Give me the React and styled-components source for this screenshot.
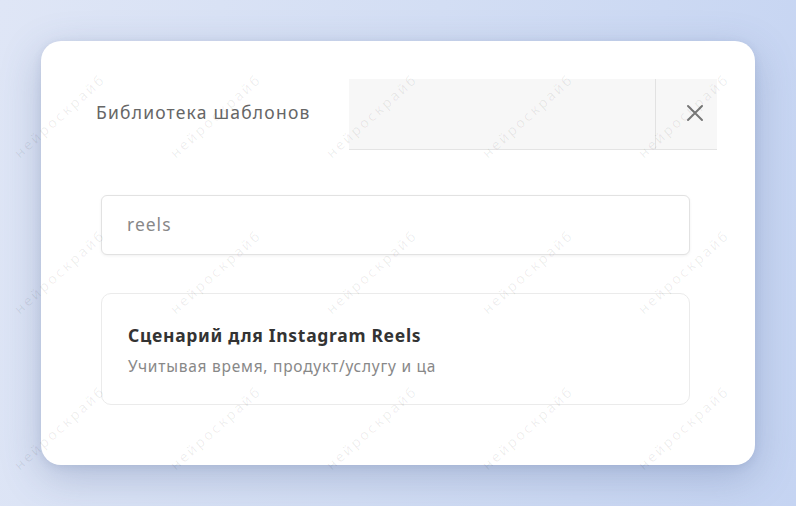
import React from 'react';
import styled, { createGlobalStyle } from 'styled-components';

const GlobalStyle = createGlobalStyle`
    html, body {
        margin: 0;
        padding: 0;
        height: 100%;
    }
    body {
        font-family: "Noto Sans", "Open Sans", Arial, sans-serif;
        background: linear-gradient(100deg, #dfe6f6 0%, #d3def4 50%, #c5d4f2 100%);
        overflow: hidden;
    }
    #root {
        height: 100%;
    }
`

const Page = styled.div`
    position: relative;
    height: 506px;
    padding: 41px 41px 0 41px;
    box-sizing: border-box;
    overflow: hidden;
`

const Modal = styled.div`
    width: 714px;
    height: 424px;
    box-sizing: border-box;
    background: #fff;
    border-radius: 20px;
    box-shadow: 0 12px 40px rgba(70, 90, 140, 0.28), 0 2px 8px rgba(70, 90, 140, 0.12);
    padding: 38px 38px 0 38px;
    display: flex;
    flex-direction: column;
`

const Header = styled.div`
    display: grid;
    grid-template-columns: 270px 1fr;
    height: 71px;
`

const Title = styled.div`
    display: flex;
    align-items: center;
    padding-left: 17px;
    padding-bottom: 5px;
    font-size: 17.5px;
    letter-spacing: 1.2px;
    color: #666;
`

const Toolbar = styled.div`
    display: grid;
    grid-template-columns: 1fr 61px;
    background: #f7f7f7;
    border-bottom: 1px solid #e4e4e4;
`

const ToolbarSpace = styled.div`
    border-right: 1px solid #e2e2e2;
`

const CloseButton = styled.button`
    border: none;
    background: none;
    display: flex;
    align-items: center;
    justify-content: center;
    padding: 0 0 2px 16px;
    cursor: pointer;
    svg {
        display: block;
    }
`

const Body = styled.div`
    display: flex;
    flex-direction: column;
    gap: 38px;
    padding: 45px 27px 0 22px;
`

const SearchInput = styled.input`
    height: 60px;
    box-sizing: border-box;
    border: 1px solid #e2e2e2;
    border-radius: 6px;
    box-shadow: 0 1px 3px rgba(0, 0, 0, 0.06);
    padding: 0 25px 2px;
    font-family: inherit;
    font-size: 17.5px;
    letter-spacing: 1px;
    color: #888;
    outline: none;
    background: #fff;
`

const ResultCard = styled.div`
    height: 112px;
    box-sizing: border-box;
    border: 1px solid #ebebeb;
    border-radius: 10px;
    padding: 29px 26px 0;
    display: flex;
    flex-direction: column;
    gap: 8px;
`

const ResultTitle = styled.div`
    font-size: 17.5px;
    font-weight: 700;
    letter-spacing: 0.7px;
    color: #333;
`

const ResultText = styled.div`
    font-size: 15.5px;
    letter-spacing: 0.75px;
    color: #888;
`

const Watermarks = styled.div`
    position: absolute;
    inset: 0;
    overflow: hidden;
    pointer-events: none;
`

const MarkGrid = styled.div`
    display: grid;
    grid-template-columns: repeat(5, 156px);
    grid-auto-rows: 156px;
    margin: 37px 0 0 -18px;
`

const MarkCell = styled.div`
    display: flex;
    align-items: center;
    justify-content: center;
`

const Mark = styled.span`
    display: block;
    transform: rotate(-42deg);
    font-size: 14px;
    letter-spacing: 2.5px;
    color: rgba(0, 0, 0, 0.07);
    white-space: nowrap;
`

const CloseIcon = () => (
    <svg width="18" height="18" viewBox="0 0 18 18">
        <path d="M2 2 L16 16 M16 2 L2 16" stroke="#777" strokeWidth="2" strokeLinecap="round" />
    </svg>
)

const App = () => {
    const marks = Array.from({ length: 15 });

    return (
        <>
            <GlobalStyle />
            <Page>
                <Modal>
                    <Header>
                        <Title>Библиотека шаблонов</Title>
                        <Toolbar>
                            <ToolbarSpace />
                            <CloseButton aria-label="Закрыть"><CloseIcon /></CloseButton>
                        </Toolbar>
                    </Header>
                    <Body>
                        <SearchInput defaultValue="reels" />
                        <ResultCard>
                            <ResultTitle>Сценарий для Instagram Reels</ResultTitle>
                            <ResultText>Учитывая время, продукт/услугу и ца</ResultText>
                        </ResultCard>
                    </Body>
                </Modal>
                <Watermarks>
                    <MarkGrid>
                        {marks.map((_, i) => (
                            <MarkCell key={i}><Mark>нейроскрайб</Mark></MarkCell>
                        ))}
                    </MarkGrid>
                </Watermarks>
            </Page>
        </>
    )
}

export default App;
